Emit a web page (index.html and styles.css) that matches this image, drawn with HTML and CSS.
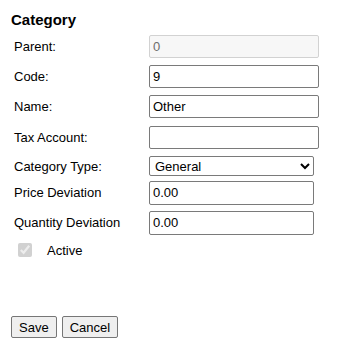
FILE: index.html
```html
<!DOCTYPE html>
<html lang="en">
<head>
    <meta charset="UTF-8">
    <meta name="viewport" content="width=device-width, initial-scale=1.0">
    <title>Category</title>
    <link rel="stylesheet" href="styles.css">
</head>
<body>
    <div class="panel">
        <h2 class="title">Category</h2>
        <form class="form">
            <div class="row">
                <label class="lbl">Parent:</label>
                <input class="field wide" type="text" value="0" disabled>
            </div>
            <div class="row">
                <label class="lbl">Code:</label>
                <input class="field wide" type="text" value="9">
            </div>
            <div class="row name-row">
                <label class="lbl">Name:</label>
                <input class="field wide" type="text" value="Other">
            </div>
            <div class="row">
                <label class="lbl">Tax Account:</label>
                <input class="field wide" type="text" value="">
            </div>
            <div class="row sel-row">
                <label class="lbl">Category Type:</label>
                <select class="pick">
                    <option>General</option>
                </select>
            </div>
            <div class="row">
                <label class="lbl">Price Deviation</label>
                <input class="field narrow" type="text" value="0.00">
            </div>
            <div class="row">
                <label class="lbl">Quantity Deviation</label>
                <input class="field narrow" type="text" value="0.00">
            </div>
            <div class="check-row">
                <input class="chk" type="checkbox" checked disabled>
                <span class="chk-text">Active</span>
            </div>
            <div class="buttons">
                <button class="btn" type="button">Save</button>
                <button class="btn" type="button">Cancel</button>
            </div>
        </form>
    </div>
</body>
</html>
```
FILE: styles.css
```css
body{
    margin: 0;
    background: #fff;
    font-family: "Liberation Sans", Arial, sans-serif;
    font-size: 13px;
    color: #000;
}
.panel{
    padding: 11px 0 0 11px;
}
.title{
    margin: 0;
    font-size: 15px;
    font-weight: bold;
    line-height: 17px;
}
.form{
    margin-top: 7px;
}
.row{
    display: flex;
    align-items: center;
    height: 23px;
    margin-bottom: 7px;
}
.name-row{
    margin-bottom: 8px;
}
.sel-row{
    height: 20px;
    margin-bottom: 5px;
}
.lbl{
    width: 138px;
    padding-left: 3px;
    box-sizing: border-box;
}
.field{
    box-sizing: border-box;
    height: 23px;
    margin: 0;
    padding: 1px 3px;
    border: 1px solid #7a7a7a;
    border-radius: 2px;
    font-family: "Liberation Sans", Arial, sans-serif;
    font-size: 13px;
    color: #000;
    background: #fff;
}
.field:disabled{
    background: #f7f7f7;
    border-color: #d2d2d2;
    color: #6d6d6d;
}
.wide{
    width: 170px;
}
.narrow{
    width: 165px;
    height: 24px;
}
.pick{
    box-sizing: border-box;
    width: 165px;
    height: 20px;
    margin: 0;
    padding: 0 1px;
    border: 1px solid #7a7a7a;
    border-radius: 2px;
    font-family: "Liberation Sans", Arial, sans-serif;
    font-size: 13px;
    color: #000;
    background: #fff;
}
.check-row{
    display: flex;
    align-items: center;
    height: 16px;
    margin-top: 8px;
    padding-left: 7px;
}
.chk{
    width: 14px;
    height: 14px;
    margin: 0;
}
.chk-text{
    margin-left: 15px;
}
.buttons{
    display: flex;
    gap: 5px;
    margin-top: 58px;
}
.btn{
    height: 22px;
    margin: 0;
    padding: 1px 7px;
    border: 1px solid #767676;
    border-radius: 2px;
    background: #efefef;
    font-family: "Liberation Sans", Arial, sans-serif;
    font-size: 13px;
    color: #000;
}
```
